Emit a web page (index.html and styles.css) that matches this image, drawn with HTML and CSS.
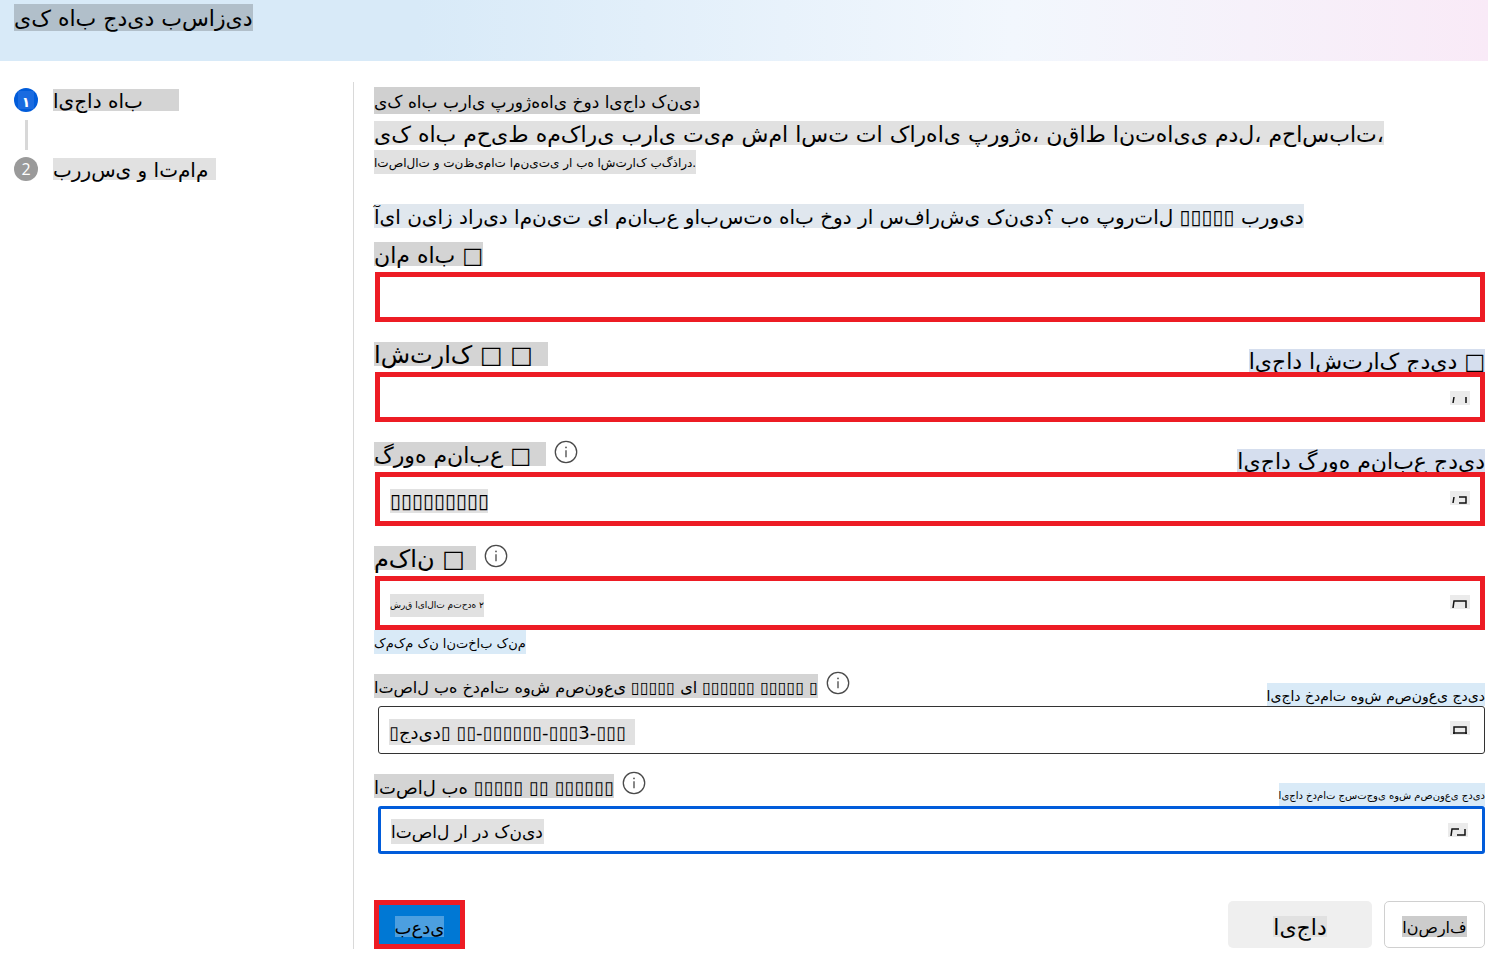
FILE: index.html
```html
<!DOCTYPE html>
<html lang="fa">
<head>
<meta charset="utf-8">
<title>یک هاب جدید بسازید</title>
<meta name="viewport" content="width=device-width, initial-scale=1">
<link rel="stylesheet" href="styles.css">
</head>
<body>
<svg width="0" height="0" class="defs" aria-hidden="true">
  <symbol id="info" viewBox="0 0 24 24">
    <circle cx="12" cy="12" r="10.700" fill="none" stroke="#4a4a4a" stroke-width="1.300"/>
    <path d="M12 10.200V17.300" stroke="#555" stroke-width="1.400"/>
    <circle cx="12" cy="7.400" r="0.900" fill="#555"/>
  </symbol>
</svg>
<header class="banner"><h1 class="t t22 tone-title">یک هاب جدید بسازید</h1></header>
<div class="page">
  <nav class="steps">
    <ol>
      <li class="step"><span class="dot dot-on"><span class="t dot-patch">۱</span></span><span class="t t20 tone-mid w126">ایجاد هاب</span></li>
      <li class="line" aria-hidden="true"></li>
      <li class="step"><span class="dot">2</span><span class="t t20 tone-light w163">بررسی و اتمام</span></li>
    </ol>
  </nav>
  <main class="content">
    <h2 class="t t17 tone-head">یک هاب برای پروژه‌های خود ایجاد کنید</h2>
    <p class="intro"><span class="t t22 tone-light">یک هاب محیط همکاری برای تیم شما است تا کارهای پروژه، نقاط انتهایی مدل، محاسبات،</span>
    <span class="t t12 tone-light">اتصالات و تنظیمات امنیتی را به اشتراک بگذارد.</span></p>
    <a href="#" class="t t20 tone-blue portal">آیا نیاز دارید امنیت یا منابع وابسته هاب خود را سفارشی کنید؟ به پورتال ▯▯▯▯▯ بروید</a>
    <form>
      <div class="field">
        <div class="head first"><label for="name" class="t t22 tone-mid">نام هاب □</label></div>
        <div class="box red h50"><input id="name" type="text"></div>
      </div>
      <div class="field">
        <div class="head"><label for="sub" class="t t24 tone-mid w174">اشتراک □ □</label><a href="#" class="t t22 tone-link">ایجاد اشتراک جدید □</a></div>
        <div class="box red h50"><select id="sub"><option></option></select><span class="mark"><svg viewBox="0 0 20 14"><path d="M3 12l1-6M16 6v6" /></svg></span></div>
      </div>
      <div class="field">
        <div class="head"><label for="group" class="t t22 tone-mid w172">گروه منابع □</label><svg class="info"><use href="#info"/></svg><a href="#" class="t t22 tone-link">ایجاد گروه منابع جدید</a></div>
        <div class="box red h54"><select id="group" class="t t20 fill v98"><option>▯▯▯▯▯▯▯▯▯</option></select><span class="mark"><svg viewBox="0 0 20 14"><path d="M3 12l1-6M9 6h7v6H9" /></svg></span></div>
      </div>
      <div class="field">
        <div class="head"><label for="place" class="t t24 tone-mid w102">مکان □</label><svg class="info"><use href="#info"/></svg></div>
        <div class="box red h54"><select id="place" class="t t9 fill v92"><option>&#8237;شرق ایالات متحده ۲&#8236;</option></select><span class="mark"><svg viewBox="0 0 20 14"><path d="M3 13l1-7H16v7" /></svg></span></div>
        <a href="#" class="t t13 tone-sky help">کمکم کن انتخاب کنم</a>
      </div>
      <div class="field">
        <div class="head tall"><label for="ai" class="t t16 tone-mid">اتصال به خدمات هوش مصنوعی ▯▯▯▯▯ یا ▯▯▯▯▯▯ ▯▯▯▯▯ ▯</label><svg class="info"><use href="#info"/></svg><a href="#" class="t t14 tone-sky">ایجاد خدمات هوش مصنوعی جدید</a></div>
        <div class="box thin h48"><select id="ai" class="t t18 fill v246"><option>&#8237;▯جدید▯ ▯▯-▯▯▯▯▯▯-▯▯▯3-▯▯▯&#8236;</option></select><span class="mark"><svg viewBox="0 0 20 14"><path d="M4 13V6H16V13M3 12H17" /></svg></span></div>
      </div>
      <div class="field">
        <div class="head tall"><label for="search" class="t t18 tone-mid">اتصال به ▯▯▯▯▯ ▯▯ ▯▯▯▯▯▯</label><svg class="info"><use href="#info"/></svg><a href="#" class="t t10 tone-sky">ایجاد خدمات جستجوی هوش مصنوعی جدید</a></div>
        <div class="box focus h48"><select id="search" class="t t17 fill v153"><option>&#8237;اتصال را رد کنید&#8236;</option></select><span class="mark"><svg viewBox="0 0 20 14"><path d="M3 13L4 6H11M17 6V12H9" /></svg></span></div>
      </div>
      <div class="actions">
        <button type="button" class="btn next"><span class="t t18">بعدی</span></button>
        <button type="submit" class="btn create"><span class="t t22">ایجاد</span></button>
        <button type="button" class="btn cancel"><span class="t t16">انصراف</span></button>
      </div>
    </form>
  </main>
</div>
</body>
</html>
```
FILE: styles.css
```css
* { box-sizing: border-box; }
body { margin: 0; background: #fff; color: #000; font-family: "DejaVu Sans", "Noto Sans", sans-serif; font-size: 16px; }
h1, h2, p, ol { margin: 0; padding: 0; font-weight: 400; }
ol { list-style: none; }
a { color: #000; text-decoration: none; }
.defs { position: absolute; }

/* Letters run left to right in their isolated forms */
.t { direction: ltr; unicode-bidi: bidi-override; font-feature-settings: "init" 0, "medi" 0, "fina" 0, "rlig" 0, "liga" 0; white-space: nowrap; padding-top: 3px; line-height: 21px; font-weight: 400; }
.t9 { font-size: 9px; }
.t10 { font-size: 10px; }
.t12 { font-size: 12px; }
.t13 { font-size: 13px; }
.t14 { font-size: 14px; }
.t16 { font-size: 16px; }
.t17 { font-size: 17px; }
.t18 { font-size: 18px; }
.t20 { font-size: 20px; }
.t22 { font-size: 22px; }
.t24 { font-size: 24px; }
.w102 { min-width: 102px; }
.w126 { min-width: 126px; }
.w163 { min-width: 163px; }
.w172 { min-width: 172px; }
.w174 { min-width: 174px; }
.tone-title { background: #b1bfca; }
.tone-head { background: #d0d0d0; }
.tone-mid { background: #d4d4d4; }
.tone-light { background: #e1e1e1; }
.tone-blue { background: #e0e7ee; }
.tone-link { background: #d5deee; }
.tone-sky { background: #d9eaf7; }

.banner { display: flex; align-items: flex-start; height: 61px; padding: 4px 14px; background: linear-gradient(90deg, #d8eaf8 0%, #d8eaf8 28%, #f2f7fd 68%, #f6f1fa 84%, #f9eaf7 100%); }
.banner .t { line-height: 24px; }
.page { display: flex; padding-top: 21px; }
.steps { flex: 0 0 354px; padding: 6px 14px; border-right: 1px solid #d9d9d9; }
.step { display: flex; align-items: center; gap: 15px; height: 24px; }
.step > .t { line-height: 19px; }
.dot { display: flex; align-items: center; justify-content: center; width: 24px; height: 24px; border-radius: 50%; background: #9a9a9a; color: #fff; font: 16px "Open Sans", sans-serif; }
.dot-on { background: #015cda; }
.dot-patch { width: 16px; height: 18px; padding: 0; background: #1a6be0; text-align: center; font: bold 14px "DejaVu Sans", sans-serif; line-height: 22px; }
.line { width: 3px; height: 30px; margin: 8px 11px 7px; background: #d8d8d8; }

.content { flex: 1; min-width: 0; display: flex; flex-direction: column; align-items: flex-start; padding: 5px 3px 0 20px; }
.content h2 { line-height: 24px; }
.intro { display: flex; flex-direction: column; align-items: flex-start; gap: 5px; margin-top: 7px; }
.portal { margin-top: 30px; }
form { align-self: stretch; }
.head { display: flex; align-items: flex-end; height: 50px; }
.head.first { height: 44px; }
.head.tall { height: 52px; }
.head label { margin-bottom: 6px; }
.head.tall label { margin-bottom: 8px; }
.head a { margin-left: auto; line-height: 20px; }
.info { width: 24px; height: 24px; margin: 0 0 8px 8px; }
.tall .info { margin-bottom: 11px; }
.box { position: relative; display: flex; border: 5px solid #ed1c24; margin-left: 1px; }
.box.thin { border: 1px solid #333; border-radius: 3px; margin-left: 4px; }
.box.focus { border: 3px solid #015cda; border-radius: 3px; margin-left: 4px; }
.h48 { height: 48px; }
.h50 { height: 50px; }
.h54 { height: 54px; }
.box input, .box select { flex: 1; min-width: 0; appearance: none; border: 0; outline: 0; margin: 0; padding: 0 10px; background: transparent; color: #000; font-family: inherit; }
.box select.fill { padding-top: 5px; background: linear-gradient(#e1e1e1, #e1e1e1) no-repeat 10px 60%; }
.box select.v98 { background-size: 98px 24px; }
.box select.v92 { background-size: 94px 23px; }
.box select.v246 { background-size: 246px 26px; }
.box select.v153 { background-size: 153px 25px; }
.mark { position: absolute; right: 10px; top: 14px; width: 20px; height: 14px; background: #ebebeb; pointer-events: none; }
.thin .mark, .focus .mark { right: 14px; }
.mark svg { display: block; fill: none; stroke: #111; stroke-width: 1.5; }
.help { display: inline-block; }
.actions { display: flex; gap: 12px; margin-top: 46px; align-items: center; }
.btn { display: flex; align-items: center; justify-content: center; height: 47px; padding: 3px 0 0; border: 0; border-radius: 5px; color: #000; font-family: inherit; }
.btn .t { line-height: 18px; }
.next { width: 91px; height: 49px; margin-right: auto; border: 5px solid #ed1c24; border-radius: 0; background: #0078d4; }
.next .t { background: #4c9fe0; }
.create { width: 144px; background: #efefef; }
.create .t { background: #e1e1e1; }
.cancel { width: 101px; border: 1px solid #d0d0d0; background: #fff; }
.cancel .t { background: #ccc; }
```
